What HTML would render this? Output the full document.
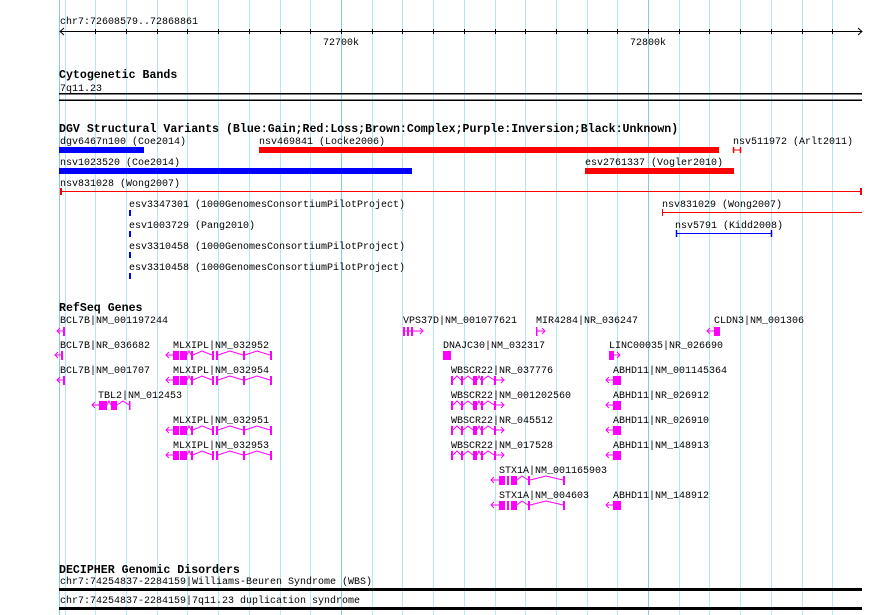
<!DOCTYPE html>
<html><head><meta charset="utf-8"><style>
html,body{margin:0;padding:0;background:#fff;width:890px;height:615px;overflow:hidden}
svg{display:block}
text{font-family:"Liberation Mono",monospace;font-size:10px;fill:#000}
.h{font-weight:bold;font-size:11.6px}
.m{fill:#f0f;stroke:none}
.ml{stroke:#f0f;fill:none;stroke-width:1}
</style></head><body>
<svg width="890" height="615" viewBox="0 0 890 615" xmlns="http://www.w3.org/2000/svg">
<defs>
<g id="bcl"><polyline class="ml" points="60,-3 57,0 60,3"/><line class="ml" x1="57" y1="0" x2="64" y2="0"/><rect class="m" x="63" y="-4" width="2" height="9"/></g>
<g id="mlx">
<polyline class="ml" points="169,-3 166,0 169,3"/><line class="ml" x1="166" y1="0" x2="173" y2="0"/>
<rect class="m" x="173" y="-4" width="6" height="9"/><rect class="m" x="180" y="-4" width="7" height="9"/>
<rect class="m" x="191" y="-4" width="2" height="9"/>
<polyline class="ml" points="187,0 189,-4 191,0"/>
<polyline class="ml" points="193,0 202,-4 212,0"/>
<rect class="m" x="212" y="-4" width="2" height="9"/><rect class="m" x="216" y="-4" width="2" height="9"/>
<polyline class="ml" points="218,0 230,-4 243,0"/><rect class="m" x="243" y="-4" width="2" height="9"/>
<polyline class="ml" points="245,0 257,-4 270,0"/><rect class="m" x="270" y="-4" width="2" height="9"/>
</g>
<g id="wbs">
<rect class="m" x="451" y="-4" width="2" height="9"/>
<polyline class="ml" points="453,0 457,-4 461,0"/><rect class="m" x="461" y="-4" width="2" height="9"/>
<polyline class="ml" points="463,0 468,-4 473,0"/><rect class="m" x="473" y="-4" width="4" height="9"/>
<polyline class="ml" points="477,0 479,-4 481,0"/><rect class="m" x="481" y="-4" width="2" height="9"/>
<polyline class="ml" points="483,0 488,-4 494,0"/><rect class="m" x="494" y="-4" width="2" height="9"/>
<line class="ml" x1="496" y1="0" x2="504" y2="0"/><polyline class="ml" points="501,-3 504,0 501,3"/>
</g>
<g id="abh"><polyline class="ml" points="609,-3 606,0 609,3"/><line class="ml" x1="606" y1="0" x2="613" y2="0"/><rect class="m" x="613" y="-4" width="8" height="9"/></g>
<g id="stx">
<polyline class="ml" points="494,-3 491,0 494,3"/><line class="ml" x1="491" y1="0" x2="499" y2="0"/>
<rect class="m" x="499" y="-4" width="6" height="9"/><rect class="m" x="507" y="-4" width="2" height="9"/><rect class="m" x="511" y="-4" width="6" height="9"/>
<polyline class="ml" points="517,0 522,-4 528,0"/><rect class="m" x="528" y="-4" width="2" height="9"/>
<polyline class="ml" points="530,0 546,-4 563,0"/><rect class="m" x="563" y="-4" width="2" height="9"/>
</g>
</defs>
<g stroke="#aeeaf0" stroke-width="1">
<line x1="65.5" y1="0" x2="65.5" y2="615"/><line x1="95.5" y1="0" x2="95.5" y2="615"/><line x1="126.5" y1="0" x2="126.5" y2="615"/><line x1="157.5" y1="0" x2="157.5" y2="615"/><line x1="187.5" y1="0" x2="187.5" y2="615"/><line x1="218.5" y1="0" x2="218.5" y2="615"/><line x1="249.5" y1="0" x2="249.5" y2="615"/><line x1="280.5" y1="0" x2="280.5" y2="615"/><line x1="310.5" y1="0" x2="310.5" y2="615"/><line x1="372.5" y1="0" x2="372.5" y2="615"/><line x1="402.5" y1="0" x2="402.5" y2="615"/><line x1="433.5" y1="0" x2="433.5" y2="615"/><line x1="464.5" y1="0" x2="464.5" y2="615"/><line x1="495.5" y1="0" x2="495.5" y2="615"/><line x1="525.5" y1="0" x2="525.5" y2="615"/><line x1="556.5" y1="0" x2="556.5" y2="615"/><line x1="587.5" y1="0" x2="587.5" y2="615"/><line x1="617.5" y1="0" x2="617.5" y2="615"/><line x1="679.5" y1="0" x2="679.5" y2="615"/><line x1="709.5" y1="0" x2="709.5" y2="615"/><line x1="740.5" y1="0" x2="740.5" y2="615"/><line x1="771.5" y1="0" x2="771.5" y2="615"/><line x1="802.5" y1="0" x2="802.5" y2="615"/><line x1="832.5" y1="0" x2="832.5" y2="615"/>
</g>
<g stroke="#88c8e8"><line x1="341.5" y1="0" x2="341.5" y2="615"/><line x1="648.5" y1="0" x2="648.5" y2="615"/><line x1="59.5" y1="0" x2="59.5" y2="615"/></g>
<!-- ruler -->
<text x="60" y="24">chr7:72608579..72868861</text>
<g stroke="#000" fill="none">
<line x1="60" y1="31.5" x2="862" y2="31.5"/>
<polyline points="64,28 60,31.5 64,35"/><polyline points="858,28 862,31.5 858,35"/>
<path d="M95.5 29v5M126.5 29v5M157.5 29v5M187.5 29v5M218.5 29v5M249.5 29v5M280.5 29v5M310.5 29v5M341.5 29v5M372.5 29v5M402.5 29v5M433.5 29v5M464.5 29v5M495.5 29v5M525.5 29v5M556.5 29v5M587.5 29v5M617.5 29v5M648.5 29v5M679.5 29v5M709.5 29v5M740.5 29v5M771.5 29v5M802.5 29v5M832.5 29v5"/>
</g>
<text x="323" y="45">72700k</text><text x="630" y="45">72800k</text>
<!-- cyto -->
<text class="h" x="59" y="78">Cytogenetic Bands</text>
<text x="60" y="91">7q11.23</text>
<rect x="59" y="93" width="803" height="1.5" fill="#000"/><rect x="59" y="99.5" width="803" height="1.5" fill="#000"/>
<!-- DGV -->
<text class="h" x="59" y="132">DGV Structural Variants (Blue:Gain;Red:Loss;Brown:Complex;Purple:Inversion;Black:Unknown)</text>
<text x="60" y="144">dgv6467n100 (Coe2014)</text>
<text x="259" y="144">nsv469841 (Locke2006)</text>
<text x="733" y="144">nsv511972 (Arlt2011)</text>
<rect x="59" y="147" width="85" height="6" fill="#00f"/>
<rect x="259" y="147" width="460" height="6" fill="#f00"/>
<g stroke="#f00"><line x1="734" y1="150" x2="740" y2="150"/><line x1="733.5" y1="147" x2="733.5" y2="153" stroke-width="1.5"/><line x1="740.5" y1="147" x2="740.5" y2="153" stroke-width="1.5"/></g>
<text x="60" y="165">nsv1023520 (Coe2014)</text>
<text x="585" y="165">esv2761337 (Vogler2010)</text>
<rect x="59" y="168" width="353" height="6" fill="#00f"/>
<rect x="585" y="168" width="149" height="6" fill="#f00"/>
<text x="60" y="186">nsv831028 (Wong2007)</text>
<g stroke="#f00"><line x1="60" y1="191.5" x2="862" y2="191.5"/><line x1="61" y1="188" x2="61" y2="195" stroke-width="2"/><line x1="861" y1="188" x2="861" y2="195" stroke-width="2"/></g>
<text x="129" y="207">esv3347301 (1000GenomesConsortiumPilotProject)</text>
<text x="129" y="228">esv1003729 (Pang2010)</text>
<text x="129" y="249">esv3310458 (1000GenomesConsortiumPilotProject)</text>
<text x="129" y="270">esv3310458 (1000GenomesConsortiumPilotProject)</text>
<g fill="#00f"><rect x="129" y="210" width="2" height="6"/><rect x="129" y="231" width="2" height="6"/><rect x="129" y="252" width="2" height="6"/><rect x="129" y="273" width="2" height="6"/></g>
<text x="662" y="207">nsv831029 (Wong2007)</text>
<g stroke="#f00"><line x1="662" y1="212.5" x2="862" y2="212.5"/><line x1="662.5" y1="209" x2="662.5" y2="216"/></g>
<text x="675" y="228">nsv5791 (Kidd2008)</text>
<g stroke="#00f"><line x1="676" y1="233.5" x2="772" y2="233.5"/><line x1="676.5" y1="230" x2="676.5" y2="237" stroke-width="1.5"/><line x1="771.5" y1="230" x2="771.5" y2="237" stroke-width="1.5"/></g>
<!-- RefSeq -->
<text class="h" x="59" y="311">RefSeq Genes</text>
<text x="60" y="323">BCL7B|NM_001197244</text>
<text x="403" y="323">VPS37D|NM_001077621</text>
<text x="536" y="323">MIR4284|NR_036247</text>
<text x="714" y="323">CLDN3|NM_001306</text>
<use href="#bcl" y="331"/>
<g transform="translate(0,331)"><rect class="m" x="403" y="-4" width="2" height="9"/><rect class="m" x="407" y="-4" width="2" height="9"/><rect class="m" x="411" y="-4" width="2" height="9"/><line class="ml" x1="403" y1="0" x2="423" y2="0"/><polyline class="ml" points="420,-3 423,0 420,3"/>
<rect class="m" x="536" y="-4" width="1.5" height="9"/><line class="ml" x1="537" y1="0" x2="545" y2="0"/><polyline class="ml" points="542,-3 545,0 542,3"/>
<polyline class="ml" points="710,-3 707,0 710,3"/><line class="ml" x1="707" y1="0" x2="714" y2="0"/><rect class="m" x="714" y="-4" width="6" height="9"/></g>
<text x="60" y="348">BCL7B|NR_036682</text>
<text x="173" y="348">MLXIPL|NM_032952</text>
<text x="443" y="348">DNAJC30|NM_032317</text>
<text x="609" y="348">LINC00035|NR_026690</text>
<use href="#bcl" y="355" x="-2"/><use href="#mlx" y="355"/>
<rect class="m" x="443" y="351" width="8" height="9"/>
<rect class="m" x="609" y="351" width="5" height="9"/><line class="ml" x1="614" y1="355" x2="620" y2="355"/><polyline class="ml" points="617,352 620,355 617,358"/>
<text x="60" y="373">BCL7B|NM_001707</text>
<text x="173" y="373">MLXIPL|NM_032954</text>
<text x="451" y="373">WBSCR22|NR_037776</text>
<text x="613" y="373">ABHD11|NM_001145364</text>
<use href="#bcl" y="380"/><use href="#mlx" y="380"/><use href="#wbs" y="380"/><use href="#abh" y="380"/>
<text x="98" y="398">TBL2|NM_012453</text>
<text x="451" y="398">WBSCR22|NM_001202560</text>
<text x="613" y="398">ABHD11|NR_026912</text>
<g transform="translate(0,405)"><polyline class="ml" points="95,-3 92,0 95,3"/><line class="ml" x1="92" y1="0" x2="99" y2="0"/><rect class="m" x="99" y="-4" width="8" height="9"/><polyline class="ml" points="107,0 109,-4 111,0"/><rect class="m" x="111" y="-4" width="6" height="9"/><polyline class="ml" points="117,0 123,-4 129,0"/><rect class="m" x="129" y="-4" width="1.5" height="9"/></g>
<use href="#wbs" y="405"/><use href="#abh" y="405"/>
<text x="173" y="423">MLXIPL|NM_032951</text>
<text x="451" y="423">WBSCR22|NR_045512</text>
<text x="613" y="423">ABHD11|NR_026910</text>
<use href="#mlx" y="430"/><use href="#wbs" y="430"/><use href="#abh" y="430"/>
<text x="173" y="448">MLXIPL|NM_032953</text>
<text x="451" y="448">WBSCR22|NM_017528</text>
<text x="613" y="448">ABHD11|NM_148913</text>
<use href="#mlx" y="455"/><use href="#wbs" y="455"/><use href="#abh" y="455"/>
<text x="499" y="473">STX1A|NM_001165903</text>
<use href="#stx" y="480"/>
<text x="499" y="498">STX1A|NM_004603</text>
<text x="613" y="498">ABHD11|NM_148912</text>
<use href="#stx" y="505"/><use href="#abh" y="505"/>
<!-- DECIPHER -->
<text class="h" x="59" y="573">DECIPHER Genomic Disorders</text>
<text x="60" y="584">chr7:74254837-2284159|Williams-Beuren Syndrome (WBS)</text>
<rect x="59" y="588" width="803" height="3" fill="#000"/>
<text x="60" y="603">chr7:74254837-2284159|7q11.23 duplication syndrome</text>
<rect x="59" y="607" width="803" height="3" fill="#000"/>
</svg>
</body></html>
